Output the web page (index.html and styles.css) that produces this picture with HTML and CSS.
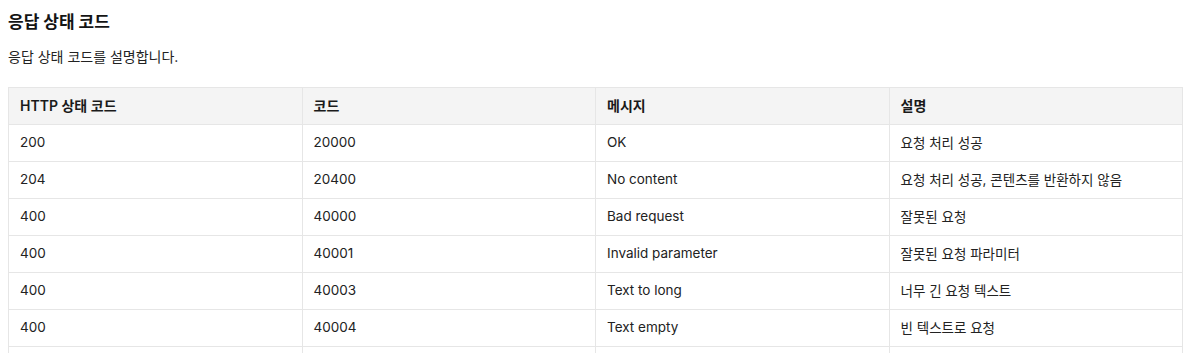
FILE: index.html
```html
<!DOCTYPE html>
<html lang="ko">
<head>
  <meta charset="UTF-8">
  <meta name="viewport" content="width=device-width, initial-scale=1.0">
  <title>응답 상태 코드</title>
  <link rel="stylesheet" href="styles.css">
</head>
<body>
  <div class="doc">
    <h2>응답 상태 코드</h2>
    <p>응답 상태 코드를 설명합니다.</p>
    <table class="status-table">
      <thead>
        <tr>
          <th>HTTP 상태 코드</th>
          <th>코드</th>
          <th>메시지</th>
          <th>설명</th>
        </tr>
      </thead>
      <tbody>
        <tr><td>200</td><td>20000</td><td>OK</td><td>요청 처리 성공</td></tr>
        <tr><td>204</td><td>20400</td><td>No content</td><td>요청 처리 성공, 콘텐츠를 반환하지 않음</td></tr>
        <tr><td>400</td><td>40000</td><td>Bad request</td><td>잘못된 요청</td></tr>
        <tr><td>400</td><td>40001</td><td>Invalid parameter</td><td>잘못된 요청 파라미터</td></tr>
        <tr><td>400</td><td>40003</td><td>Text to long</td><td>너무 긴 요청 텍스트</td></tr>
        <tr><td>400</td><td>40004</td><td>Text empty</td><td>빈 텍스트로 요청</td></tr>
        <tr><td></td><td></td><td></td><td></td></tr>
      </tbody>
    </table>
  </div>
</body>
</html>
```

FILE: styles.css
```css
* {
  margin: 0;
  padding: 0;
  box-sizing: border-box;
  font-family: Inter, "Noto Sans CJK KR", sans-serif;
}

body {
  background: #ffffff;
  color: #1f1f1f;
}

.doc {
  padding: 11px 17px 0 8px;
}

.doc h2 {
  font-size: 17px;
  font-weight: 700;
  line-height: 22px;
  color: #141414;
}

.doc p {
  margin-top: 14px;
  font-size: 14px;
  line-height: 19px;
  color: #222;
}

.status-table {
  width: 100%;
  margin-top: 21px;
  border-collapse: collapse;
  table-layout: fixed;
  font-size: 13.5px;
}

.status-table th,
.status-table td {
  border: 1px solid #e6e6e6;
  padding: 0 11px 3px;
  height: 37px;
  text-align: left;
  vertical-align: middle;
  color: #222;
}

.status-table th {
  background: #f4f4f4;
  font-size: 14px;
  font-weight: 600;
  color: #1a1a1a;
}
```
